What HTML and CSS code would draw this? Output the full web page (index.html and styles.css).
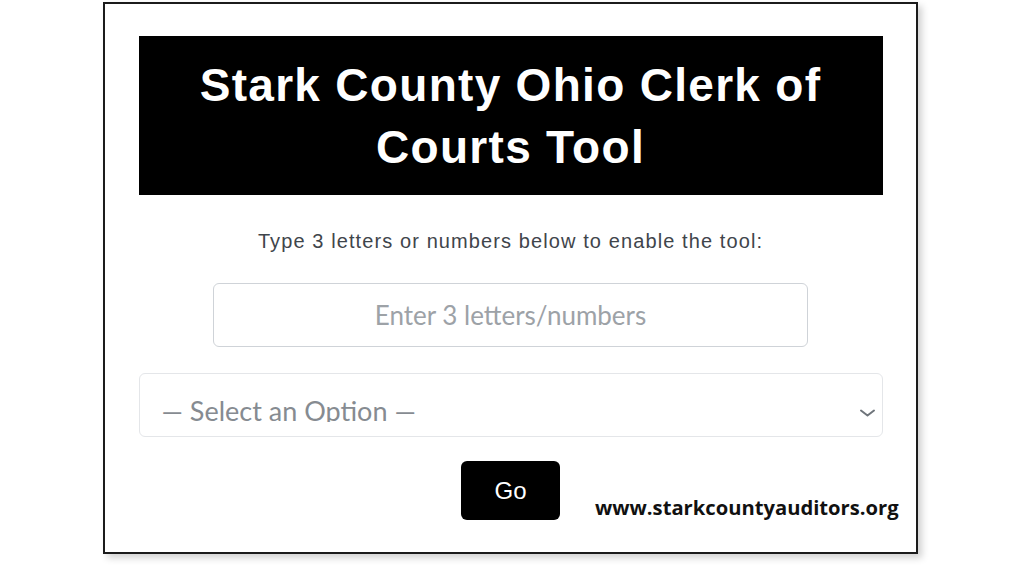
FILE: index.html
```html
<!DOCTYPE html>
<html lang="en">
<head>
<meta charset="utf-8">
<title>Stark County Ohio Clerk of Courts Tool</title>
<link rel="stylesheet" href="styles.css">
</head>
<body>
<div class="frame">
  <header class="banner">
    <h1 class="title">Stark County Ohio Clerk of<br>Courts Tool</h1>
  </header>
  <p class="hint">Type 3 letters or numbers below to enable the tool:</p>
  <input class="code-input" type="text" placeholder="Enter 3 letters/numbers">
  <div class="select">
    <span class="select-text">— Select an Option —</span>
    <svg class="chevron" width="17" height="10" viewBox="0 0 17 10" aria-hidden="true">
      <polyline points="2,2.5 8.5,7.5 15,2.5" fill="none" stroke="#6f757b" stroke-width="2" stroke-linecap="round" stroke-linejoin="round"/>
    </svg>
  </div>
  <button class="go" type="button">Go</button>
  <div class="watermark">www.starkcountyauditors.org</div>
</div>
</body>
</html>
```
FILE: styles.css
```css
html, body {
  margin: 0;
  padding: 0;
  background: #ffffff;
}

body {
  width: 1024px;
  height: 576px;
  overflow: hidden;
  font-family: "Liberation Sans", Arial, sans-serif;
}

.frame {
  position: relative;
  box-sizing: border-box;
  width: 815px;
  height: 552px;
  margin: 2px 0 0 103px;
  border: 2px solid #1b1b1b;
  background: #ffffff;
  box-shadow: 4px 4px 7px rgba(0, 0, 0, 0.18);
  display: flex;
  flex-direction: column;
  align-items: center;
  padding-top: 32px;
}

.banner {
  width: 744px;
  height: 159px;
  flex: none;
  background: #000000;
  display: flex;
  align-items: center;
  justify-content: center;
}

.title {
  margin: 0;
  color: #ffffff;
  font-family: "Liberation Sans", Arial, sans-serif;
  font-weight: 700;
  font-size: 46px;
  line-height: 62px;
  letter-spacing: 1.3px;
  text-align: center;
}

.hint {
  margin: 34px 0 0;
  font-size: 20px;
  line-height: 24px;
  letter-spacing: 1.1px;
  color: #3f454b;
  text-align: center;
}

.code-input {
  box-sizing: border-box;
  margin-top: 30px;
  width: 595px;
  height: 64px;
  border: 1px solid #cfd3d8;
  border-radius: 6px;
  background: #ffffff;
  font-family: Lato, "Open Sans", sans-serif;
  font-size: 26px;
  color: #333;
  text-align: center;
  padding: 0 12px;
  outline: none;
}

.code-input::placeholder {
  color: #9da2a7;
  opacity: 1;
}

.select {
  box-sizing: border-box;
  margin-top: 26px;
  width: 744px;
  height: 64px;
  border: 1px solid #e4e6e9;
  border-radius: 6px;
  background: #ffffff;
  display: flex;
  align-items: flex-start;
  padding: 19px 6px 0 22px;
}

.select-text {
  display: block;
  height: 29px;
  overflow: hidden;
  font-family: Lato, "Open Sans", sans-serif;
  font-size: 27px;
  line-height: 35px;
  color: #868b91;
  white-space: nowrap;
}

.chevron {
  margin-left: auto;
  align-self: center;
  margin-top: -3px;
}

.go {
  margin-top: 24px;
  width: 99px;
  height: 59px;
  border: none;
  border-radius: 6px;
  background: #000000;
  color: #ffffff;
  font-family: "Liberation Sans", Arial, sans-serif;
  font-size: 24px;
  padding: 0;
}

.watermark {
  position: absolute;
  left: 490px;
  top: 490px;
  font-family: "Open Sans", sans-serif;
  font-weight: 700;
  font-size: 20.2px;
  line-height: 27px;
  color: #111111;
  white-space: nowrap;
}
```
